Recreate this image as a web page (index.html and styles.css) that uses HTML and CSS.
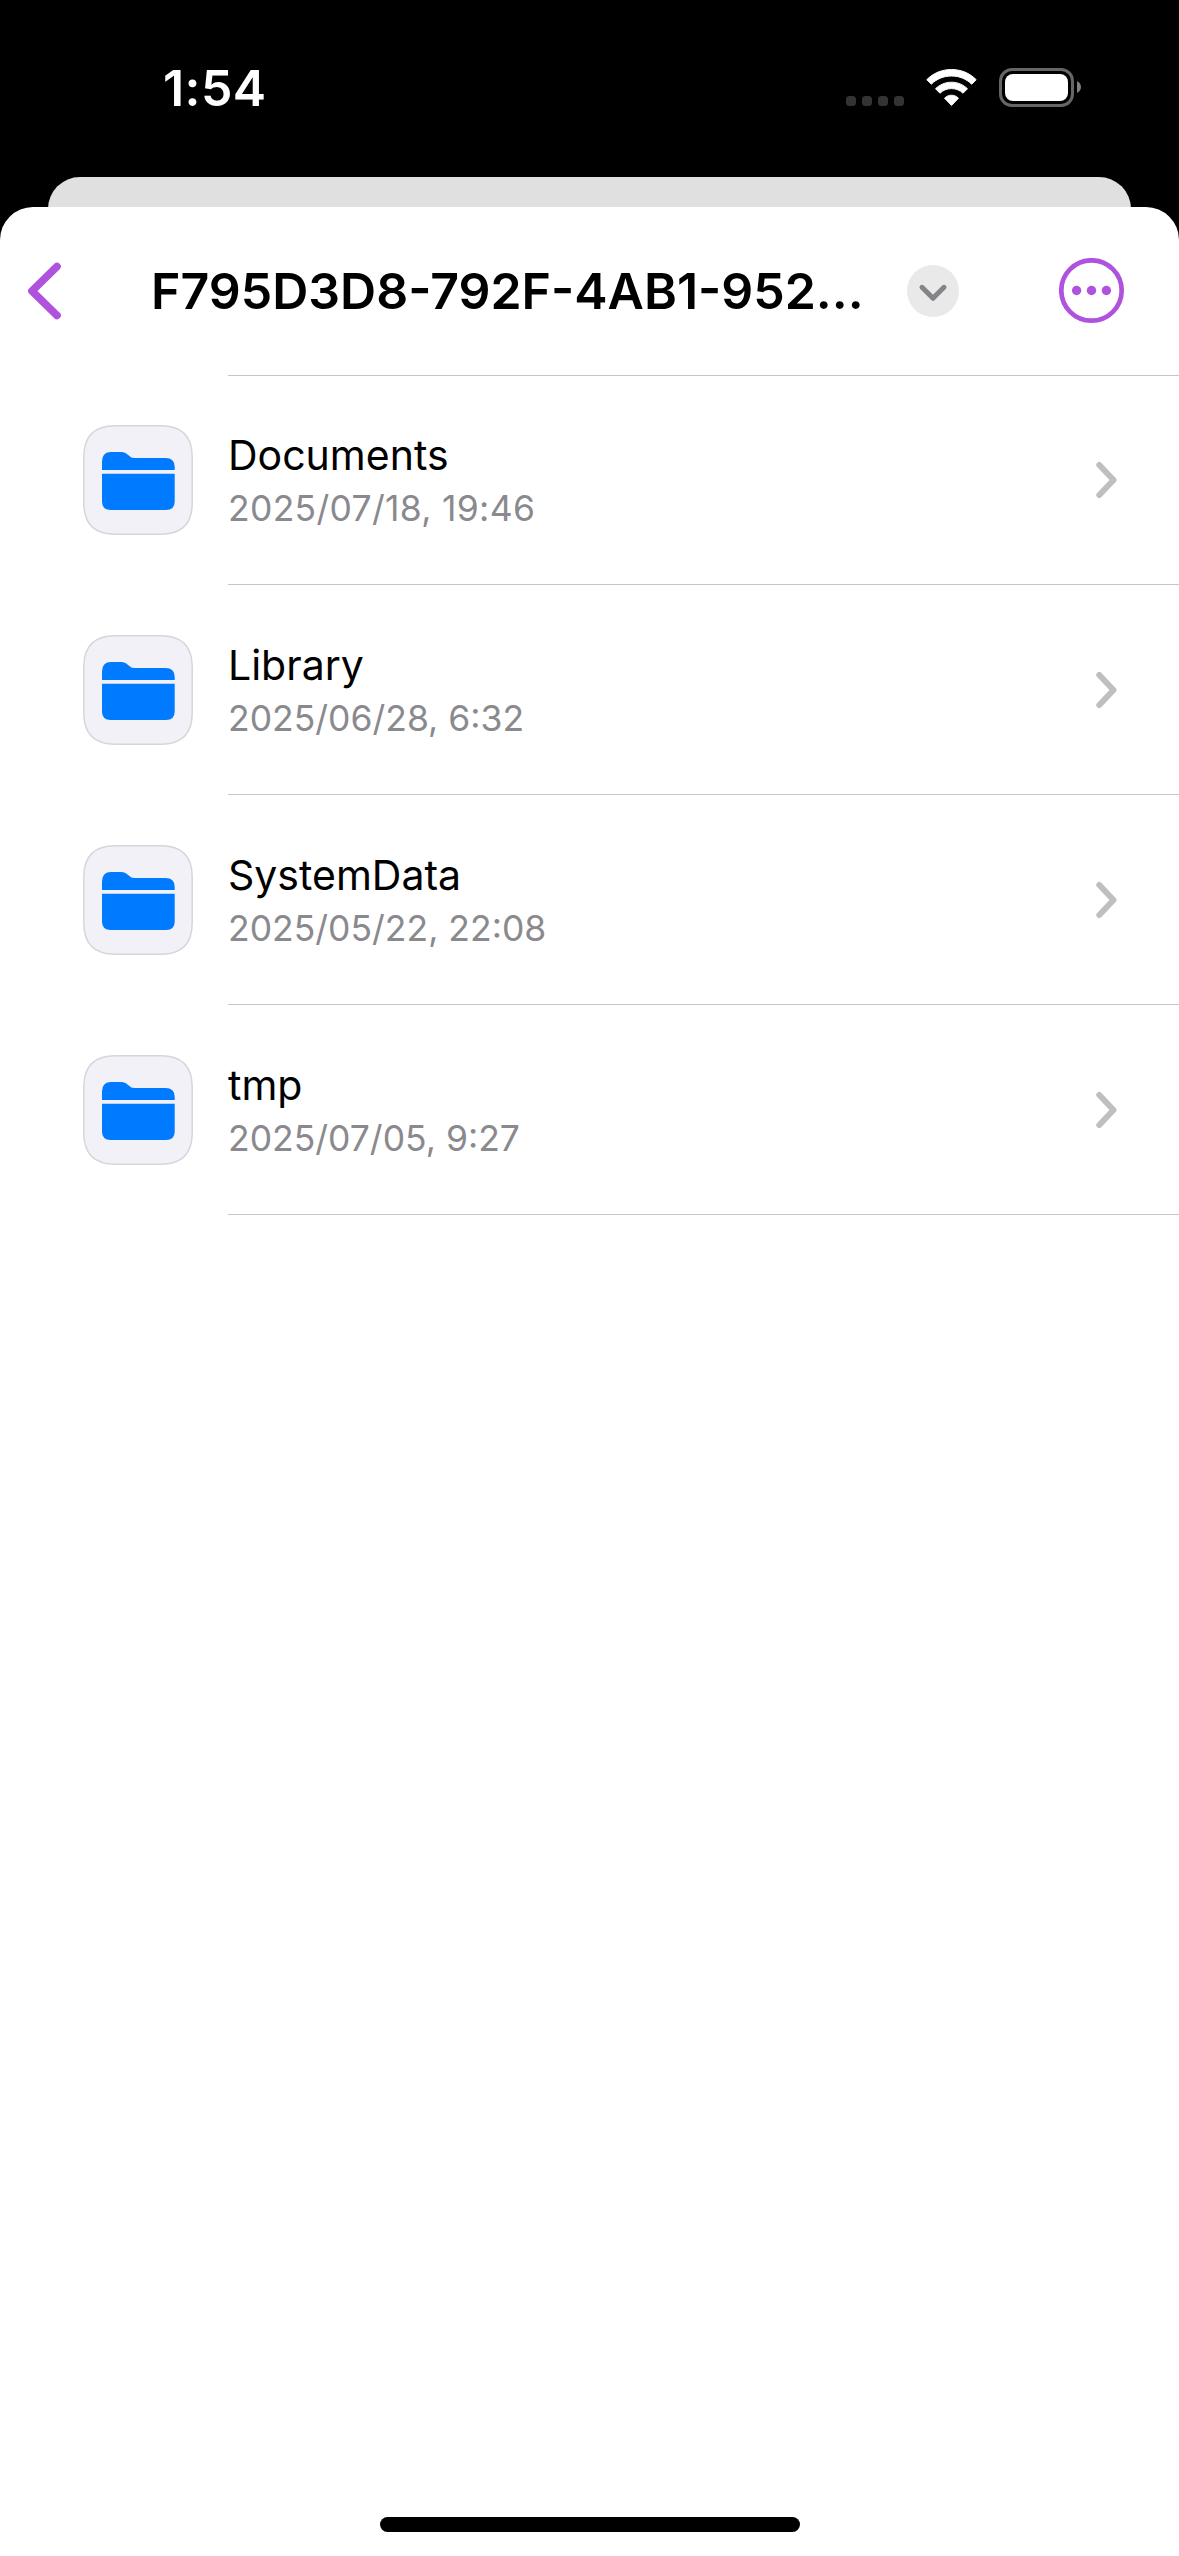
FILE: index.html
```html
<!DOCTYPE html>
<html lang="en">
<head>
<meta charset="utf-8">
<title>Files</title>
<link rel="stylesheet" href="styles.css">
</head>
<body>
<svg class="defs" aria-hidden="true">
  <symbol id="folder" viewBox="0 0 110 110">
    <path class="tile" d="M55 .8H78C99 .8 109.2 11 109.2 32V78C109.2 99 99 109.2 78 109.2H32C11 109.2 .8 99 .8 78V32C.8 11 11 .8 32 .8Z"/>
    <path class="folder" d="M19 45V36.500Q19 27 28 27H36.500C42 27 43.500 28.500 45.500 30.300C48 32.500 48.500 33 51.500 33H82.500Q91.700 33 91.700 42V45Z"/>
    <path class="folder" d="M19 48.800H91.700V76.500Q91.700 85 83 85H27.700Q19 85 19 76.500Z"/>
  </symbol>
  <symbol id="disclosure" viewBox="0 0 22 38"><path d="M3.300 4L17.500 19L3.300 34"/></symbol>
</svg>
<div class="screen">
  <header class="status">
    <span class="time">1:54</span>
    <svg class="indicators" width="240" height="44" viewBox="844 65 240 44">
      <g fill="#333"><rect x="846" y="96" width="10" height="10" rx="3.500"/><rect x="862" y="96" width="10" height="10" rx="3.500"/><rect x="878" y="96" width="10" height="10" rx="3.500"/><rect x="894" y="96" width="10" height="10" rx="3.500"/></g>
      <g fill="#fff" stroke="#fff" stroke-width="1" stroke-linejoin="round">
        <path d="M926.800 79.700C933.500 73 942 69.500 951.500 69.500S969.500 73 976.200 79.700L971.700 84.200C966.300 79 959.500 76 951.500 76S936.700 79 931.300 84.200Z"/>
        <path d="M935.500 88.700C940 84.500 945.500 82.200 951.500 82.200S963 84.500 967.500 88.700L963 93.200C959.800 90.200 956 88.600 951.500 88.600S943.200 90.200 940 93.200Z"/>
        <path d="M944.500 98.200C946.500 96.200 949 95.200 951.500 95.200S956.500 96.200 958.500 98.200L951.500 105.400Z"/>
      </g>
      <rect x="1000.500" y="69.500" width="72" height="36" rx="11.500" fill="none" stroke="#666" stroke-width="3"/>
      <rect x="1005" y="74" width="63" height="27" rx="8" fill="#fff"/>
      <path d="M1077 81C1082.300 83.500 1082.300 90.500 1077 93Z" fill="#808080"/>
    </svg>
  </header>
  <div class="back-card"></div>
  <main class="sheet">
    <nav class="bar">
      <svg class="back" width="36" height="60" viewBox="0 0 36 60"><path d="M30 5.600L5 30L30 54.400"/></svg>
      <h1 class="title">F795D3D8-792F-4AB1-952...</h1>
      <svg class="menu" width="52" height="52" viewBox="0 0 52 52"><circle cx="26" cy="26" r="26"/><path d="M15 22.300L26 33.300L37 22.300"/></svg>
      <svg class="more" width="66" height="66" viewBox="0 0 66 66"><circle class="ring" cx="32.500" cy="32.500" r="30.200"/><circle cx="17.600" cy="32.500" r="4.700"/><circle cx="32.500" cy="32.500" r="4.700"/><circle cx="47.400" cy="32.500" r="4.700"/></svg>
    </nav>
    <ul class="list">
      <li class="row"><svg class="icon"><use href="#folder"/></svg><div class="cell"><div class="text"><span class="name">Documents</span><span class="date date-loose">2025/07/18, 19:46</span></div><svg class="chevron"><use href="#disclosure"/></svg></div></li>
      <li class="row"><svg class="icon"><use href="#folder"/></svg><div class="cell"><div class="text"><span class="name">Library</span><span class="date">2025/06/28, 6:32</span></div><svg class="chevron"><use href="#disclosure"/></svg></div></li>
      <li class="row"><svg class="icon"><use href="#folder"/></svg><div class="cell"><div class="text"><span class="name">SystemData</span><span class="date">2025/05/22, 22:08</span></div><svg class="chevron"><use href="#disclosure"/></svg></div></li>
      <li class="row"><svg class="icon"><use href="#folder"/></svg><div class="cell"><div class="text"><span class="name">tmp</span><span class="date">2025/07/05, 9:27</span></div><svg class="chevron"><use href="#disclosure"/></svg></div></li>
    </ul>
    <div class="home"></div>
  </main>
</div>
</body>
</html>
```
FILE: styles.css
```css
* { box-sizing: border-box; }
body { margin: 0; background: #000; font-family: Inter, "Liberation Sans", sans-serif; }
svg { display: block; flex: none; }
.defs { position: absolute; width: 0; height: 0; }
.screen { width: 1179px; height: 2556px; display: flex; flex-direction: column; background: #000; }

.status { height: 177px; flex: none; display: flex; justify-content: space-between; align-items: flex-start; padding: 58px 95px 0 163px; }
.time { color: #fff; font-size: 50px; line-height: 60px; font-weight: 600; letter-spacing: 0.4px; }
.indicators { margin-top: 7px; }

.back-card { flex: none; height: 70px; margin: 0 48px -40px; background: #e0e0e0; border-radius: 32px 32px 0 0; }
.sheet { flex: 1; display: flex; flex-direction: column; background: #fff; border-radius: 33px 33px 0 0; }

.bar { height: 168px; flex: none; display: flex; align-items: center; padding: 0 54px 1px 27px; }
.back { fill: none; stroke: #af52de; stroke-width: 7.7px; stroke-linecap: round; stroke-linejoin: round; }
.title { margin: 0 0 0 88px; width: 756px; font-size: 50px; line-height: 60px; font-weight: 600; white-space: nowrap; }
.menu circle { fill: #e9e9ea; }
.menu path { fill: none; stroke: #838388; stroke-width: 5px; stroke-linecap: round; stroke-linejoin: round; }
.more { margin-left: auto; fill: #af52de; }
.more .ring { fill: none; stroke: #af52de; stroke-width: 4.7px; }

.list { margin: 0; padding: 0; list-style: none; }
.row { height: 210px; display: flex; align-items: center; padding-left: 83px; }
.icon { width: 110px; height: 110px; }
.tile { fill: #f2f1f7; stroke: #d6d6da; stroke-width: 1.5px; }
.folder { fill: #007aff; }
.cell { flex: 1; height: 210px; margin-left: 35px; display: flex; align-items: center; justify-content: space-between; padding-right: 61px; box-shadow: inset 0 -1px #c6c6c8; }
.row:first-child .cell { box-shadow: inset 0 1px #c6c6c8, inset 0 -1px #c6c6c8; }
.text { display: flex; flex-direction: column; padding-top: 3px; }
.name { font-size: 41px; line-height: 54px; color: #000; }
.date { font-size: 35.500px; line-height: 53px; color: #8a8a8e; }
.date-loose { letter-spacing: 0.3px; }
.chevron { width: 22px; height: 38px; fill: none; stroke: #bfbfbf; stroke-width: 6px; stroke-linecap: round; stroke-linejoin: round; }

.home { width: 420px; height: 15px; margin: auto auto 24px; border-radius: 8px; background: #000; }
```
